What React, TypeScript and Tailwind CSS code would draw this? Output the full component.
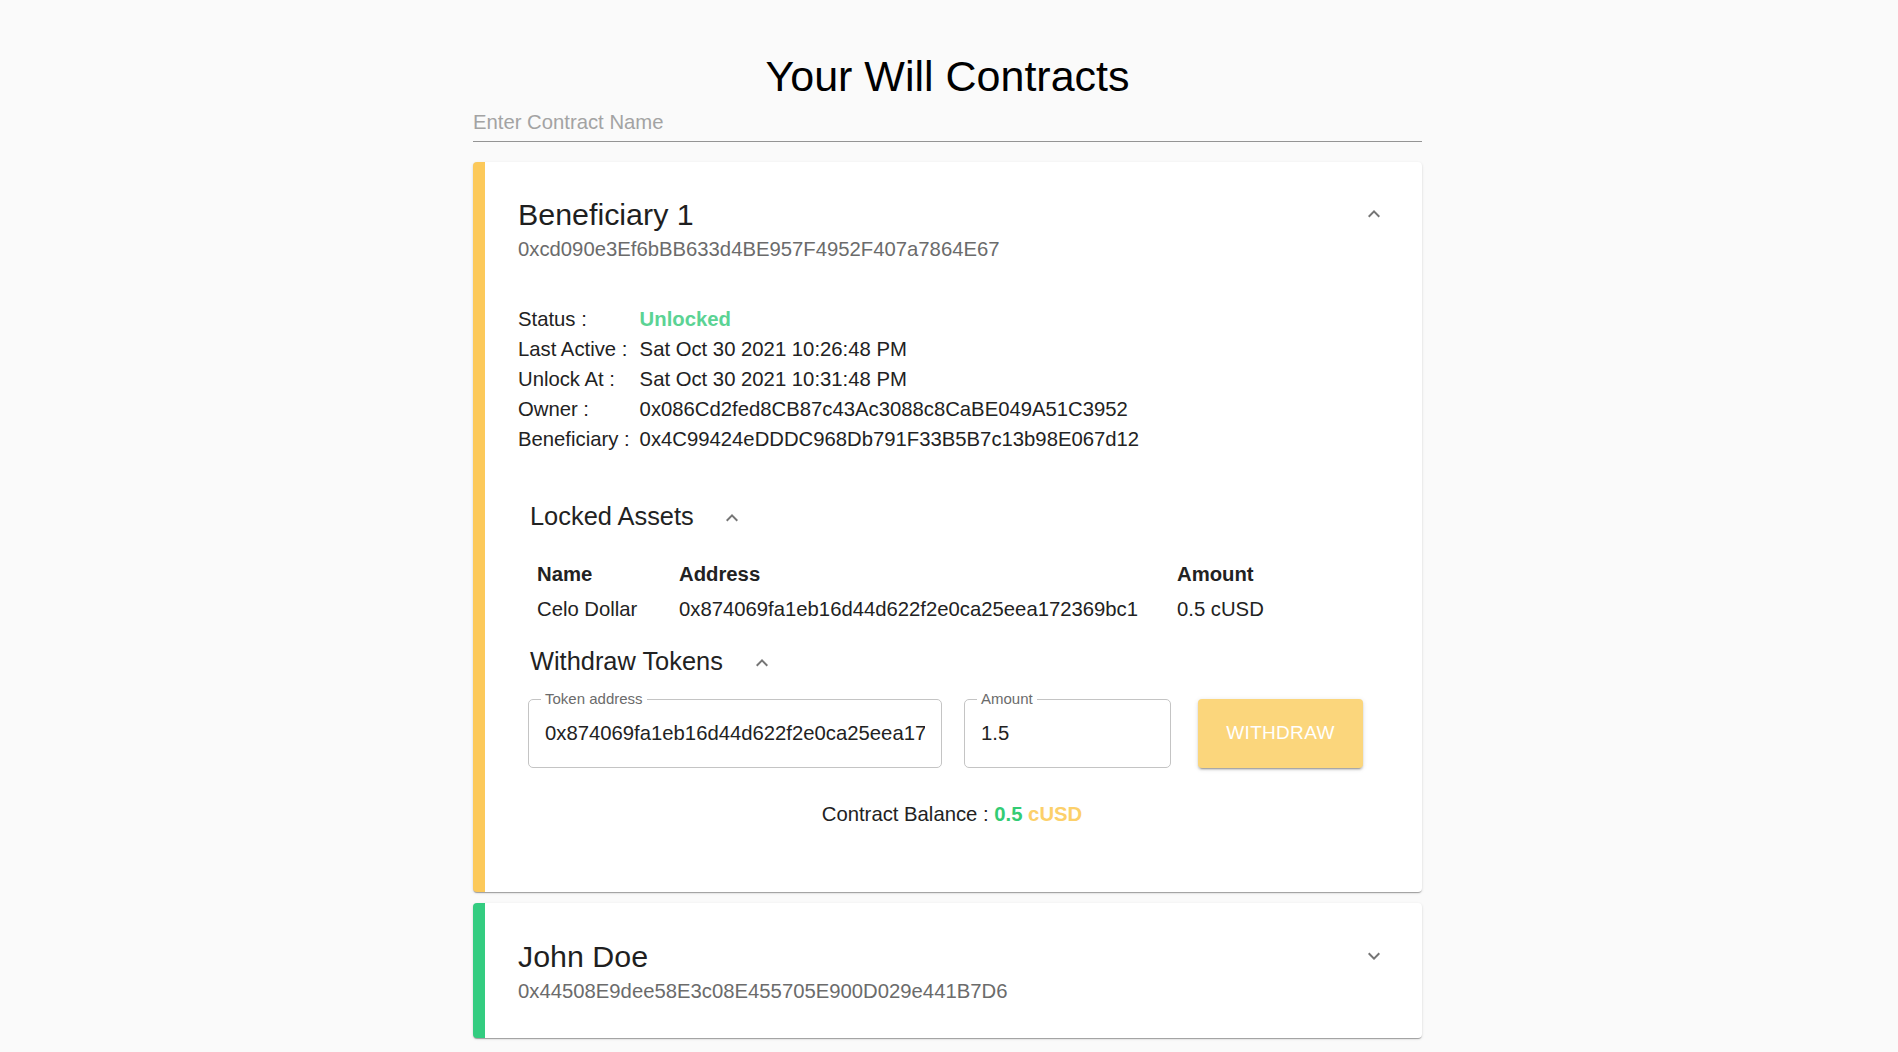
import { useState } from "react";

const FONT = "font-['Liberation_Sans',Arial,sans-serif]";

const DETAILS = [
  { label: "Status :", value: "Unlocked", status: true },
  { label: "Last Active :", value: "Sat Oct 30 2021 10:26:48 PM" },
  { label: "Unlock At :", value: "Sat Oct 30 2021 10:31:48 PM" },
  { label: "Owner :", value: "0x086Cd2fed8CB87c43Ac3088c8CaBE049A51C3952" },
  { label: "Beneficiary :", value: "0x4C99424eDDDC968Db791F33B5B7c13b98E067d12" },
];

function Chevron({ up }: { up?: boolean }) {
  return (
    <svg viewBox="0 0 24 24" className="h-6 w-6 shrink-0 fill-[#757575]">
      {up ? (
        <path d="M12 8l-6 6 1.41 1.41L12 10.83l4.59 4.58L18 14z" />
      ) : (
        <path d="M16.59 8.59 12 13.17 7.41 8.59 6 10l6 6 6-6z" />
      )}
    </svg>
  );
}

function Outlined({ label, value, width }: { label: string; value: string; width: string }) {
  return (
    <div className={`relative h-[69px] ${width} rounded-[5px] border border-[#c4c4c4]`}>
      <span className="absolute -top-[10px] left-[12px] bg-white px-[4px] text-[15px] leading-[18px] text-[#6b6b6b]">
        {label}
      </span>
      <input
        readOnly
        value={value}
        className="h-full w-full bg-transparent px-[16px] text-[20.3px] text-[#222] outline-none"
      />
    </div>
  );
}

function CardHeader({ name, address, open }: { name: string; address: string; open: boolean }) {
  return (
    <div className="flex items-start justify-between">
      <div>
        <h2 className="text-[30.4px] leading-[36px] text-[#1f1f1f]">{name}</h2>
        <p className="mt-[5px] text-[20.3px] leading-[24px] text-[#6b6b6b]">{address}</p>
      </div>
      <div className="mt-[6px]">
        <Chevron up={open} />
      </div>
    </div>
  );
}

export default function App() {
  const [search, setSearch] = useState("");

  return (
    <div className={`min-h-screen bg-[#fafafa] pr-[3px] ${FONT}`}>
      <div className="mx-auto w-[949px] pt-[52px]">
        <h1 className="text-center text-[43px] leading-[48px] text-black">Your Will Contracts</h1>

        <div className="border-b border-[#949494] pt-[12px] pb-[9px]">
          <input
            value={search}
            onChange={(e) => setSearch(e.target.value)}
            placeholder="Enter Contract Name"
            className="block h-[20px] w-full bg-transparent text-[20.3px] leading-[20px] text-[#222] outline-none placeholder:text-[#a3a3a3]"
          />
        </div>

        {/* open contract */}
        <div className="mt-[20px] rounded-[4px] border-l-[12px] border-[#fcc95a] bg-white pt-[34px] pr-[36px] pb-[66px] pl-[33px] shadow-[0_2px_1px_-1px_rgba(0,0,0,0.2),0_1px_1px_0_rgba(0,0,0,0.14),0_1px_3px_0_rgba(0,0,0,0.12)]">
          <CardHeader name="Beneficiary 1" address="0xcd090e3Ef6bBB633d4BE957F4952F407a7864E67" open />

          <div className="mt-[43px] grid grid-cols-[auto_1fr] gap-x-[10px] text-[20.3px] leading-[30px] text-[#222]">
            {DETAILS.map((d) => (
              <div key={d.label} className="contents">
                <span>{d.label}</span>
                <span className={d.status ? "font-bold text-[#5bd394]" : ""}>{d.value}</span>
              </div>
            ))}
          </div>

          <div className="mt-[47px] flex items-center pl-[12px]">
            <h3 className="text-[25.4px] leading-[30px] text-[#222]">Locked Assets</h3>
            <span className="ml-[26px] mt-[4px]">
              <Chevron up />
            </span>
          </div>

          <div className="mt-[26px] grid grid-cols-[142px_498px_auto] pl-[19px] text-[20.3px] leading-[35px] text-[#222]">
            <span className="font-bold">Name</span>
            <span className="font-bold">Address</span>
            <span className="font-bold">Amount</span>
            <span>Celo Dollar</span>
            <span>0x874069fa1eb16d44d622f2e0ca25eea172369bc1</span>
            <span>0.5 cUSD</span>
          </div>

          <div className="mt-[19px] flex items-center pl-[12px]">
            <h3 className="text-[25.4px] leading-[30px] text-[#222]">Withdraw Tokens</h3>
            <span className="ml-[27px] mt-[4px]">
              <Chevron up />
            </span>
          </div>

          <div className="mt-[23px] flex items-center pl-[10px]">
            <Outlined label="Token address" value="0x874069fa1eb16d44d622f2e0ca25eea172369bc1" width="w-[414px]" />
            <div className="ml-[22px]">
              <Outlined label="Amount" value="1.5" width="w-[207px]" />
            </div>
            <button className="ml-[27px] h-[69px] w-[165px] rounded-[4px] bg-[#fbd67c] text-[19px] tracking-[0.3px] text-white shadow-[0_3px_1px_-2px_rgba(0,0,0,0.2),0_2px_2px_0_rgba(0,0,0,0.14),0_1px_5px_0_rgba(0,0,0,0.12)]">
              WITHDRAW
            </button>
          </div>

          <p className="mt-[34px] text-center text-[20.3px] leading-[24px] text-[#222]">
            Contract Balance : <span className="font-bold text-[#33cc74]">0.5</span>{" "}
            <span className="font-bold text-[#fcd06a]">cUSD</span>
          </p>
        </div>

        {/* collapsed contract */}
        <div className="mt-[11px] rounded-[4px] border-l-[12px] border-[#33cc80] bg-white pt-[35px] pr-[36px] pb-[35px] pl-[33px] shadow-[0_2px_1px_-1px_rgba(0,0,0,0.2),0_1px_1px_0_rgba(0,0,0,0.14),0_1px_3px_0_rgba(0,0,0,0.12)]">
          <CardHeader name="John Doe" address="0x44508E9dee58E3c08E455705E900D029e441B7D6" open={false} />
        </div>
      </div>
    </div>
  );
}
